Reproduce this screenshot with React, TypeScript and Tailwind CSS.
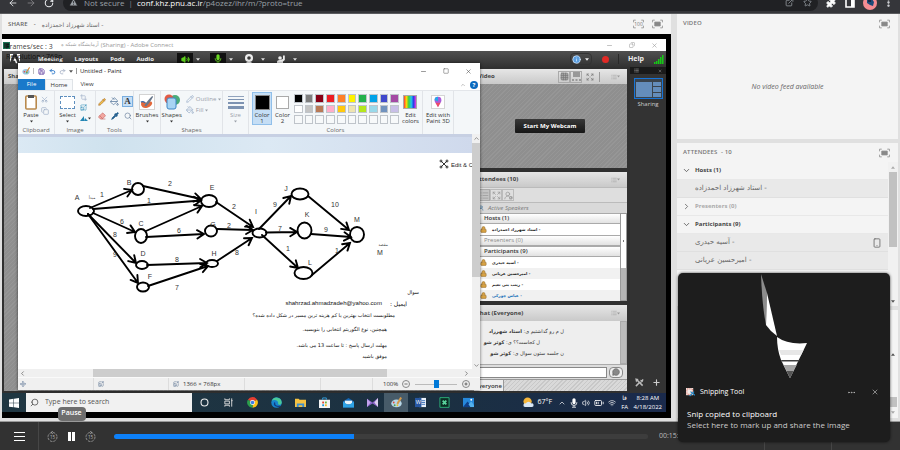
import type { ReactNode } from "react";
import {
  ArrowLeft, ArrowRight, RotateCw, TriangleAlert, ExternalLink, Star, Puzzle, MoreVertical,
  Minus, Square, X, Copy, Volume2, UserRound, Save, Undo2, Redo2, Scissors, Crop,
  Pencil, PaintBucket, Eraser, Pipette, Search, ChevronDown, ChevronRight, ChevronUp,
  ChevronLeft, Plus, Lock, MessageCircle, Wifi, Smartphone, Ellipsis,
  Info, Grid3x3, Expand, List, UserRoundCog, Move,
  ImageUpscale, BatteryMedium,
} from "lucide-react";

const ui = "font-['Open_Sans','Noto_Sans','DejaVu_Sans',sans-serif]";
const fa = "font-['DejaVu_Sans',sans-serif]";

function Caret({ className = "" }: { className?: string }) {
  return (
    <svg viewBox="0 0 6 4" className={`h-[3px] w-1 shrink-0 ${className}`}>
      <path d="M0 0h6L3 4z" fill="currentColor" />
    </svg>
  );
}

function CaretUp({ className = "" }: { className?: string }) {
  return (
    <svg viewBox="0 0 6 4" className={`h-[3px] w-1 shrink-0 ${className}`}>
      <path d="M0 4h6L3 0z" fill="currentColor" />
    </svg>
  );
}

function MicGlyph({ className = "" }: { className?: string }) {
  return (
    <svg viewBox="0 0 10 12" className={`h-2.5 w-2 ${className}`}>
      <rect x="3" y="0" width="4" height="7.500" rx="2" fill="currentColor" />
      <path d="M1.500 5v1a3.500 3 0 0 0 7 0V5M5 9v2M2.500 11.300h5" fill="none" stroke="currentColor" />
    </svg>
  );
}

/* ---------- browser ---------- */

function BrowserBar() {
  return (
    <header className="flex h-[14px] shrink-0 items-end overflow-hidden border-b border-[#5a5b5e] bg-[#35363a] text-[#e8eaed]">
      <div className="flex h-[21px] w-full shrink-0 items-center">
        <nav className="flex w-[63px] items-center gap-2 pl-2">
          <button aria-label="Back"><ArrowLeft size={10} /></button>
          <button aria-label="Forward" className="text-[#85868a]"><ArrowRight size={10} /></button>
          <button aria-label="Reload"><RotateCw size={10} strokeWidth={2.5} /></button>
        </nav>
        <div className="flex h-4 flex-1 items-center rounded-full bg-[#202124] px-1.5 text-[8px] leading-[10px] text-[#9aa0a6]">
          <TriangleAlert size={9} fill="#9aa0a6" stroke="#202124" />
          <span className="ml-1.5 whitespace-nowrap">Not secure</span>
          <span className="mx-1 text-[#80868b]">|</span>
          <a href="#page" className="whitespace-nowrap"><span className="text-white">conf.khz.pnu.ac.ir</span>/p4ozez/ihr/m/?proto=true</a>
          <div className="ml-auto flex gap-[9px]">
            <button aria-label="Share"><ExternalLink size={9} /></button>
            <button aria-label="Bookmark"><Star size={9} /></button>
          </div>
        </div>
        <div className="flex w-[82px] items-center pl-2">
          <button aria-label="Extensions"><Puzzle size={10} fill="white" /></button>
          <button aria-label="Side panel" className="ml-[9px]">
            <svg viewBox="0 0 10 10" className="size-2.5"><path d="M1 1h8v8H1z" fill="none" stroke="#fff" strokeWidth="1.6" /><path d="M6 1h3v8H6z" fill="#fff" /></svg>
          </button>
          <button aria-label="Profile" className="ml-2">
            <svg viewBox="0 0 14 14" className="size-3.5"><circle cx="7" cy="7" r="7" fill="#f58c92" /><path d="M4 4l5-1 2 3-1 4-3-1-3-2z" fill="#1d4a78" /><path d="M5 3h3v3H5z" fill="#1b2640" /></svg>
          </button>
          <button aria-label="Menu" className="ml-1.5"><MoreVertical size={11} strokeWidth={3} /></button>
        </div>
      </div>
    </header>
  );
}

function FullScreenGlyph({ label }: { label?: string }) {
  return (
    <svg viewBox="0 0 20 16" className="h-2.5 w-[11px]" fill="none" stroke="#888" strokeWidth="1.4">
      <path d="M5 1H1v4M15 1h4v4M5 15H1v-4M15 15h4v-4" />
      {label ? <text x="10" y="11.5" fontSize="9" textAnchor="middle" fill="#777" stroke="none">{label}</text> : <path d="M5 4.500h10v7H5z" fill="#888" />}
    </svg>
  );
}

/* ---------- paint window ---------- */

const palette = [
  "#000000", "#7f7f7f", "#880015", "#ed1c24", "#ff7f27", "#fff200", "#22b14c", "#00a2e8", "#3f48cc", "#a349a4",
  "#ffffff", "#c3c3c3", "#b97a57", "#ffaec9", "#ffc90e", "#efe4b0", "#b5e61d", "#99d9ea", "#7092be", "#c8bfe7",
  "#f7f9fa", "#f7f9fa", "#f7f9fa", "#f7f9fa", "#f7f9fa", "#f7f9fa", "#f7f9fa", "#f7f9fa", "#f7f9fa", "#f7f9fa",
];

function Group({ label, className, children }: { label: string; className: string; children: ReactNode }) {
  return (
    <section className={`flex shrink-0 flex-col border-r border-[#e1e4e8] ${className}`}>
      <div className="flex h-[34px] justify-center pt-px">{children}</div>
      <div className="h-2 text-center text-[6px] leading-[10px] text-[#666]">{label}</div>
    </section>
  );
}

function BigTool({ label, children, caret = true, className = "" }: { label: string; children: ReactNode; caret?: boolean; className?: string }) {
  return (
    <button className={`flex h-[33px] shrink-0 flex-col items-center justify-start text-[6px] leading-[6px] ${className}`}>
      <span className="flex h-5 shrink-0 items-center">{children}</span>
      <span className="whitespace-pre-line">{label}</span>
      {caret && <Caret className="mt-0.5 h-0.5 w-[3px]" />}
    </button>
  );
}

function Ribbon() {
  return (
    <div className="flex h-11 shrink-0 border-t border-[#e3e6ea] bg-[#f4f7f9] text-[#333]">
      <Group label="Clipboard" className="w-[37px]">
        <BigTool label="Paste">
          <svg viewBox="0 0 12 16" className="h-4 w-3"><rect x=".8" y="2" width="10.400" height="13" rx="1" fill="#fff" stroke="#b98a4e" strokeWidth="1.6" /><path d="M3 1h6v3H3z" fill="#555" /></svg>
        </BigTool>
        <div className="ml-0.5 flex flex-col gap-1 pt-1 text-[#9aabc4]">
          <button aria-label="Cut"><Scissors size={7} className="-rotate-90" /></button>
          <button aria-label="Copy"><Copy size={8} /></button>
        </div>
      </Group>
      <Group label="Image" className="w-[41px]">
        <BigTool label="Select"><span className="h-[13px] w-[15px] border border-dashed border-[#5e8fbe] bg-white" /></BigTool>
        <div className="ml-1 flex flex-col gap-[3px] pt-0.5 text-[#2386b4]">
          <button aria-label="Crop" className="text-[#9aabc4]"><Crop size={7} /></button>
          <button aria-label="Resize"><ImageUpscale size={7} /></button>
          <button aria-label="Rotate" className="flex items-center"><svg viewBox="0 0 8 8" className="size-2"><path d="M0 7l4-5v5zM4 7h4L5 4z" fill="currentColor" /></svg><Caret className="h-0.5 w-[3px] text-[#333]" /></button>
        </div>
      </Group>
      <Group label="Tools" className="w-[38px]">
        <div className="grid h-[30px] grid-cols-3 place-items-center gap-x-0.5 pt-0.5">
          <button aria-label="Pencil"><Pencil size={8} stroke="#a86b2d" fill="#f3c34b" /></button>
          <button aria-label="Fill with color"><PaintBucket size={9} stroke="#58789c" /></button>
          <button className="flex h-[11px] w-[11px] items-center justify-center border border-[#79aee0] bg-[#c5def5] font-['Liberation_Serif',serif] text-[9px] leading-none font-bold">A</button>
          <button aria-label="Eraser"><Eraser size={8} stroke="#c86a66" fill="#f2a7a0" /></button>
          <button aria-label="Color picker"><Pipette size={8} stroke="#26618f" fill="#26618f" /></button>
          <button aria-label="Magnifier"><Search size={8} stroke="#687f9b" /></button>
        </div>
      </Group>
      <Group label="" className="w-[27px]">
        <BigTool label="Brushes">
          <svg viewBox="0 0 16 16" className="size-4 border border-[#d3d3d3] bg-white"><path d="M1 8c4-3 5 2 8 1 3-2 4-2 5 0-1 5-8 7-11 5-3-3-1-4-2-6" fill="#e2683b" /><path d="M5 12c2-4 6-8 9-11l1 1c-2 4-5 8-8 11z" fill="#68788c" /><path d="M1 8c2-1 3-1 5 1" fill="none" stroke="#2b70ba" strokeWidth="1.5" /></svg>
        </BigTool>
      </Group>
      <Group label="Shapes" className="w-[62px]">
        <BigTool label="Shapes">
          <svg viewBox="0 0 16 16" className="size-4"><circle cx="11" cy="6" r="5" fill="#4aab7a" /><circle cx="5" cy="5" r="4.500" fill="#e15b46" /><rect x="3" y="4" width="9" height="11" rx="2" fill="#a8d4f3" stroke="#3f86c6" /></svg>
        </BigTool>
        <div className="ml-1 flex flex-col gap-[3px] pt-[3px] text-[6px] leading-[8px] text-[#9ba1aa]">
          <button className="flex items-center gap-0.5"><Pencil size={8} stroke="#91a7c4" />Outline<Caret className="h-0.5 w-[3px]" /></button>
          <button className="flex items-center gap-0.5"><PaintBucket size={8} stroke="#91a7c4" />Fill<Caret className="h-0.5 w-[3px]" /></button>
        </div>
      </Group>
      <Group label="" className="w-[26px]">
        <BigTool label="Size" className="text-[#9ba1aa]">
          <span className="flex w-4 flex-col gap-0.5"><i className="h-px bg-[#91a3bd]" /><i className="h-px bg-[#7d93b2]" /><i className="h-0.5 bg-[#7d93b2]" /><i className="h-[3px] bg-[#7d93b2]" /></span>
        </BigTool>
      </Group>
      <Group label="Colors" className="w-[174px]">
        <BigTool caret={false} label={"Color\n1"} className="w-5 bg-[#c5def5] outline-1 -outline-offset-1 outline-[#90bfea]"><span className="size-[15px] border border-[#888] bg-black" /></BigTool>
        <BigTool caret={false} label={"Color\n2"} className="w-[21px]"><span className="size-[13px] border border-[#aaa] bg-white" /></BigTool>
        <div className="mt-px grid h-8 w-[107px] grid-cols-10">
          {palette.map((c, i) => (
            <button key={i} aria-label={`Color ${c}`} className="m-px border border-[#bfc4ca]" style={{ backgroundColor: c }} />
          ))}
        </div>
        <BigTool caret={false} label={"Edit\ncolors"} className="ml-0.5"><span className="size-3.5 border border-[#aaa] bg-[linear-gradient(to_right,#ff3a3a,#ffd900,#35d048,#25c9e8,#2b3be8,#f03ce0)]" /></BigTool>
      </Group>
      <Group label="" className="w-[31px]">
        <BigTool caret={false} label={"Edit with\nPaint 3D"}>
          <svg viewBox="0 0 14 14" className="size-3.5 border border-[#d5d5d5] bg-white"><path d="M7 1a4 4 0 0 1 4 4c0 3-3 4-4 8-1-4-4-5-4-8a4 4 0 0 1 4-4" fill="#a85bd8" /><path d="M3 5a4 4 0 0 1 4-4v5z" fill="#28a7e8" /><path d="M4 8l6 0-3 5z" fill="#ec4b6a" /></svg>
        </BigTool>
      </Group>
    </div>
  );
}

const nodes: [number, number, number, number][] = [
  [86, 211, 8, 5], [138, 189, 6, 6], [141, 236, 6, 7], [142, 265, 6, 4], [143, 287, 6, 4.5],
  [209, 201, 8, 6], [211, 231, 6, 5.5], [212, 263.5, 6, 3.5], [259.5, 233, 7, 4.5],
  [300, 194, 8.5, 5.5], [304.5, 230.5, 7, 8], [303.5, 273, 9, 6], [357, 234.5, 7, 7.5],
];

const edges: [number, number, number, number][] = [
  [90, 208, 132, 190], [143, 186, 201, 199], [93, 209, 201, 200.5], [93, 213, 135, 232], [146, 231, 202, 206],
  [146, 237, 204, 234], [88, 214, 136, 263], [88, 214, 138, 283], [147, 265, 207, 263], [148, 286, 208, 266],
  [216, 202, 253, 227], [217, 229, 253, 230], [217, 261, 252, 238], [259, 229, 291, 196], [266, 232.5, 297, 232],
  [262, 235, 298, 268], [308, 196, 349, 230], [311, 234, 351, 237], [312, 275, 350, 243],
];

const marks: [string, number, number][] = [
  ["A", 77, 197], ["B", 129, 182], ["1", 102, 194], ["2", 170, 183], ["E", 212, 187], ["1", 149, 200], ["6", 122, 221],
  ["C", 141, 223], ["8", 115, 234], ["9", 115, 254], ["D", 143, 253], ["F", 150, 276], ["6", 179, 230], ["G", 213, 224],
  ["8", 177, 259], ["7", 177, 287], ["H", 214, 253], ["2", 234, 206], ["I", 256, 211], ["2", 229, 225], ["8", 237, 252],
  ["J", 286, 188], ["9", 275, 204], ["K", 307, 214], ["7", 280, 228], ["10", 335, 204], ["9", 326, 229], ["1", 288, 248],
  ["1", 337, 250], ["L", 310, 262], ["M", 357, 219], ["M", 380, 252],
];

function arrow([x1, y1, x2, y2]: [number, number, number, number]) {
  const a = Math.atan2(y2 - y1, x2 - x1);
  const wing = (s: number) => `${x2 - 8 * Math.cos(a + s)} ${y2 - 8 * Math.sin(a + s)}`;
  return `M${x1} ${y1}L${x2} ${y2}M${wing(0.55)}L${x2} ${y2}L${wing(-0.55)}`;
}

function Network() {
  return (
    <svg viewBox="18 153 453 134" className="block h-[134px] w-[453px] shrink-0 overflow-visible font-['Liberation_Sans',sans-serif]">
      <g fill="none" stroke="#000" strokeWidth="1.900" strokeLinecap="round">
        {edges.map((e, i) => <path key={i} d={arrow(e)} />)}
        {nodes.map(([cx, cy, rx, ry], i) => <ellipse key={i} cx={cx} cy={cy} rx={rx} ry={ry} />)}
      </g>
      <g fontSize="7" textAnchor="middle" fill="#333">
        {marks.map(([t, x, y], i) => <text key={i} x={x} y={y + 2.5}>{t}</text>)}
      </g>
      <g fontSize="4" textAnchor="middle" fill="#444" fontFamily="DejaVu Sans">
        <text x="92" y="199">مبدأ</text>
        <text x="383" y="246">مقصد</text>
      </g>
      <g stroke="#333" strokeWidth="1" fill="none">
        <path d="M441 161l6 6M447 161l-6 6" /><circle cx="441" cy="161" r="1" /><circle cx="447" cy="161" r="1" /><circle cx="441" cy="167" r="1" /><circle cx="447" cy="167" r="1" />
      </g>
      <text x="451" y="167" fontSize="6" fill="#222">Edit &amp; C</text>
    </svg>
  );
}

function PaintWindow() {
  return (
    <article className={`absolute top-6 left-4 flex h-[327px] w-[462px] flex-col overflow-hidden bg-white shadow-[0_0_3px_rgba(0,0,0,.6)] ${ui}`}>
      <div className="flex h-4 shrink-0 items-center pl-1 text-[#555]">
        <svg viewBox="0 0 10 10" className="size-2"><ellipse cx="5" cy="6" rx="4.500" ry="3.500" fill="#9bc5df" /><circle cx="3" cy="6" r="1" fill="#e44" /><circle cx="6" cy="7" r="1" fill="#4a4" /><path d="M5 6l4-6 1 1-4 6z" fill="#d78b34" /></svg>
        <span className="mx-[3px] h-1.5 w-px bg-[#bbb]" />
        <button aria-label="Save" className="ml-px"><Save size={7} stroke="#7153a8" strokeWidth={3} /></button>
        <button aria-label="Undo" className="ml-1"><Undo2 size={7} stroke="#2673c7" strokeWidth={3} /></button>
        <button aria-label="Redo" className="ml-[3px]"><Redo2 size={7} stroke="#aab5c8" strokeWidth={3} /></button>
        <Caret className="ml-[3px]" />
        <span className="mx-[3px] h-1.5 w-px bg-[#999]" />
        <h2 className="text-[6px] text-[#222]">Untitled - Paint</h2>
        <div className="mr-2 ml-auto flex gap-4">
          <button aria-label="Minimize"><Minus size={7} /></button>
          <button aria-label="Maximize"><Square size={6} /></button>
          <button aria-label="Close"><X size={7} /></button>
        </div>
      </div>
      <div className="flex h-[11px] shrink-0 items-stretch text-[6px] text-[#333]">
        <button className="w-[27px] bg-[#1979ca] text-white">File</button>
        <button className="w-7 border-x border-t border-[#dfe3e7] bg-[#f7f9fb]">Home</button>
        <button className="w-7">View</button>
        <div className="mr-0.5 ml-auto flex items-center gap-1 text-[#888]">
          <ChevronUp size={6} />
          <button className="flex size-2 items-center justify-center rounded-full bg-[#0a69be] text-[6px] leading-none font-bold text-white">?</button>
        </div>
      </div>
      <Ribbon />
      <div className="flex min-h-0 flex-1">
        <div className="flex min-w-0 flex-1 flex-col">
          <div className="h-[3px] shrink-0 bg-[#c7d0e3]" />
          <div className="h-4 shrink-0 bg-[linear-gradient(to_right,#dbe9f4,#cfe2ee_20%,#dce9f4_55%,#cfd9ec)]" />
          <Network />
          <div dir="rtl" className={`flex flex-col items-start text-[5px] text-[#111] ${fa}`}>
            <p className="mr-[53px] h-[11px] leading-[11px]">سوال</p>
            <p className="mr-[65px] flex h-[11px] gap-2 text-[6px] leading-[11px]"><span>ایمیل :</span><a href="mailto:shahrzad.ahmadzadeh@yahoo.com" className="font-['Liberation_Sans',sans-serif]">shahrzad.ahmadzadeh@yahoo.com</a></p>
            <p className="mr-[77px] h-[13px] leading-[12px]">مطلوبست انتخاب بهترین یا کم هزینه ترین مسیر در شکل داده شده؟</p>
            <p className="mr-[85px] h-[15px] leading-[15px]">همچنین، نوع الگوریتم انتخابی را بنویسید.</p>
            <p className="mr-[85px] h-[13px] leading-[16px]">مهلت ارسال پاسخ : تا ساعت 13 می باشد.</p>
            <p className="mr-[85px] h-[11px] leading-[12px]">موفق باشید</p>
          </div>
        </div>
        <div className="flex w-2 shrink-0 flex-col items-center bg-[#f0f0f0] text-[#555]">
          <ChevronUp size={7} className="my-px" />
          <div className="h-[134px] w-full bg-[#cdcdcd]" />
          <ChevronDown size={7} className="mt-auto" />
        </div>
      </div>
      <div className="flex h-2 shrink-0 items-center bg-[#f0f0f0] text-[#444]">
        <ChevronLeft size={7} className="mr-[67px] ml-px" />
        <div className="h-full w-[294px] bg-[#cdcdcd]" />
        <ChevronRight size={7} className="mr-2.5 ml-auto" />
      </div>
      <footer className="flex h-[13px] shrink-0 items-stretch border-t border-[#fafafa] bg-[#f0f0f0] text-[6px] leading-[11px] text-[#333]">
        <div className="flex w-[76px] items-center border-r border-[#ddd] pl-0.5"><Move size={6} stroke="#4b6788" /></div>
        <div className="flex w-[75px] items-center border-r border-[#ddd] pl-1"><ImageUpscale size={6} stroke="#5b7391" /></div>
        <div className="flex w-[76px] items-center gap-1 border-r border-[#ddd] pl-1"><ImageUpscale size={6} stroke="#5b7391" />1366 × 768px</div>
        <div className="w-[76px] border-r border-[#ddd]" />
        <div className="w-[52px] border-r border-[#ddd]" />
        <div className="flex flex-1 items-center gap-1 pl-2.5">
          <span>100%</span>
          <button aria-label="Zoom out" className="flex size-2 shrink-0 items-center justify-center rounded-full border border-[#888]"><Minus size={4} strokeWidth={4} /></button>
          <input type="range" aria-label="Zoom" defaultValue={50} className="mx-px h-px w-[42px] appearance-none bg-[#bbb] [&::-webkit-slider-thumb]:h-2 [&::-webkit-slider-thumb]:w-[5px] [&::-webkit-slider-thumb]:appearance-none [&::-webkit-slider-thumb]:bg-[#0078d7]" />
          <button aria-label="Zoom in" className="flex size-2 shrink-0 items-center justify-center rounded-full border border-[#888]"><Plus size={4} strokeWidth={4} /></button>
        </div>
      </footer>
    </article>
  );
}

/* ---------- shared Adobe Connect screen ---------- */

function ConnectToolbar() {
  return (
    <div className="flex h-4 shrink-0 items-center bg-linear-to-b from-[#505050] to-[#323232] pl-2 text-[6px] font-bold text-[#eee]">
      <svg viewBox="0 0 12 12" className="size-2.5"><path d="M0 0h12v12H0z" fill="#333" /><path d="M0 0h4L0 10zM12 0H8l4 10zM6 4l3 7H7L6 8H4z" fill="#fff" /></svg>
      <nav className="ml-[18px] flex w-[139px] gap-3">
        <button>Meeting</button><button>Layouts</button><button>Pods</button><button>Audio</button>
      </nav>
      <div className="flex items-center text-[#ddd]">
        <button aria-label="Speaker" className="flex h-[13px] w-4 items-center justify-center bg-[#111]"><Volume2 size={9} stroke="#5fd21d" fill="#5fd21d" /></button><Caret className="ml-[3px]" />
        <button aria-label="Microphone" className="ml-2.5 flex h-[13px] w-4 items-center justify-center bg-[#111] text-[#6ad823]"><MicGlyph /></button><Caret className="ml-[3px]" />
        <button aria-label="Webcam" className="ml-2 flex w-4 justify-center">
          <svg viewBox="0 0 10 10" className="size-2.5"><circle cx="5" cy="4" r="4" fill="#eee" /><circle cx="5" cy="4" r="1.800" fill="#3a3a3a" /><path d="M1 10l2-2h4l2 2z" fill="#eee" /></svg>
        </button>
        <Caret className="ml-1" />
        <button aria-label="Raise hand" className="ml-2 flex w-4 justify-center">
          <svg viewBox="0 0 10 10" className="size-2.5"><circle cx="4" cy="4" r="1.800" fill="#eee" /><path d="M1 10V8q0-2 3-2l3-1V1.500h1.800V6L7 7.500V10z" fill="#eee" /></svg>
        </button>
        <Caret className="ml-1" />
      </div>
      <div className="mr-0.5 ml-auto flex items-center">
        <button aria-label="Status" className="flex h-3 w-[22px] items-center justify-center gap-1 rounded-sm border border-[#333]"><Info size={9} stroke="#dcecff" fill="#5c9fe0" /><Caret /></button>
        <span className="ml-2.5 size-[7px] rounded-full bg-[#e12a26]" />
        <span className="mx-[9px] h-2.5 w-px bg-[#292929]" />
        <button className="text-[7px]">Help</button>
        <svg viewBox="0 0 10 9" className="ml-2.5 h-[9px] w-2.5"><path d="M0 7h1.500v2H0zM2 6h1.500v3H2zM4 4h1.500v5H4zM6 2h1.500v7H6zM8 0h1.500v9H8z" fill="#16c916" /></svg>
      </div>
    </div>
  );
}

const podHead = "flex shrink-0 items-center bg-linear-to-b from-[#e6e6e6] to-[#c9c9c9] text-[6px] font-bold text-[#444]";
const hatch = "bg-[repeating-linear-gradient(135deg,#8f8f8f_0px,#8f8f8f_2px,#969696_2px,#969696_3px)]";

function PodMenu() {
  return <button aria-label="Pod options" className="mr-[7px] ml-auto flex items-center text-[#999]"><List size={6} /><Caret className="h-0.5 w-[3px]" /></button>;
}

function PersonRow({ name, blue, shade }: { name: string; blue?: boolean; shade?: boolean }) {
  return (
    <li className={`flex h-[11px] items-center gap-[5px] pl-1.5 text-[4px] ${fa} ${shade ? "bg-[#f1f1f1]" : "bg-white"} ${blue ? "text-[#1670b8]" : "text-[#222]"}`}>
      <Lock size={7} stroke="#997235" fill="#d9a343" />
      <span dir="rtl" className="font-bold">{name}</span>
    </li>
  );
}

function ConnectRight() {
  const section = "h-[11px] border-y border-[#aaa] bg-linear-to-b from-white to-[#e2e2e2] pl-2.5 text-[6px] leading-[9px]";
  return (
    <div className={`flex w-[153px] shrink-0 flex-col gap-1 ${ui}`}>
      <section className="flex h-[99px] flex-col">
        <h3 className={`${podHead} h-[15px] pl-1`}>
          <span>Video</span>
          <div className="ml-auto flex items-center text-[#777]">
            <button aria-label="Grid" className="flex h-3 w-3 items-center justify-center border border-[#aaa]"><Grid3x3 size={9} fill="#aaa" /></button>
            <button aria-label="Filmstrip" className="flex h-3 w-3 items-center justify-center border border-[#aaa]"><svg viewBox="0 0 9 9" className="size-[9px]"><path d="M1 0h7v5H1zM0 7h2v2H0zM3.500 7h2v2h-2zM7 7h2v2H7z" fill="#999" /></svg></button>
            <button aria-label="Expand" className="ml-1"><Expand size={8} /></button>
            <span className="mr-[3px] ml-[5px] h-2.5 w-px bg-[#999]" />
          </div>
          <span className="ml-2"><PodMenu /></span>
        </h3>
        <div className={`flex flex-1 items-center pl-[41px] ${hatch}`}>
          <button className="h-3.5 w-[70px] rounded-[1px] bg-linear-to-b from-[#383838] to-[#171717] text-[6px] font-bold whitespace-nowrap text-white">Start My Webcam</button>
        </div>
      </section>
      <section className="flex h-[129px] flex-col bg-[#d9d9d9]">
        <h3 className={`${podHead} h-[15px] pl-px`}>Attendees&nbsp; <span>(10)</span><PodMenu /></h3>
        <div className="flex h-4 shrink-0 items-center border-y border-[#bbb] bg-[#dedede] pl-1 text-[#999]">
          <button aria-label="List view" className="flex h-3 w-3 items-center justify-center border border-[#aaa] bg-[#c4c4c4]"><List size={9} /></button>
          <button aria-label="Breakouts" className="flex h-3 w-3 items-center justify-center border border-[#bbb]"><Expand size={9} /></button>
          <button aria-label="Status view" className="flex h-3 w-3 items-center justify-center border border-[#bbb]"><UserRoundCog size={9} /></button>
        </div>
        <p className="flex h-2.5 shrink-0 items-center gap-1 pl-1 text-[6px] leading-[9px] text-[#777] italic"><UserRound size={6} stroke="#36709c" />Active Speakers</p>
        <div className="flex min-h-0 flex-1">
          <div className="min-w-0 flex-1 overflow-hidden bg-white">
            <h4 className={`${section} font-semibold text-[#333]`}>Hosts (1)</h4>
            <ul><PersonRow name="- استاد شهرزاد احمدزاده" /></ul>
            <h4 className={`${section} text-[#888]`}>Presenters (0)</h4>
            <h4 className={`${section} font-semibold text-[#333]`}>Participants (9)</h4>
            <ul>
              <PersonRow name="- آسیه حیدری" />
              <PersonRow name="- امیرحسین عریانی" shade />
              <PersonRow name="- زینب بنی نعیم" />
              <PersonRow name="- عباس چورکی" blue shade />
            </ul>
          </div>
          <div className="w-[7px] shrink-0 border border-[#999] bg-[#b5b5b5]"><div className="flex h-[54px] items-center justify-center bg-white"><span className="h-0.5 w-px bg-[#777]" /></div></div>
        </div>
      </section>
      <section className="flex flex-1 flex-col bg-[#eee]">
        <h3 className={`${podHead} h-4 pl-0.5`}>Chat&nbsp; <span>(Everyone)</span><PodMenu /></h3>
        <div className="flex min-h-0 flex-1">
          <div dir="rtl" className={`flex flex-1 flex-col items-start justify-center overflow-hidden pr-14 text-[5px] leading-[11px] whitespace-nowrap text-[#333] ${fa}`}>
            <p>ل م رو گذاشتیم ی: <b>استاد شهرزاد</b></p>
            <p className="mr-6">ل کجاست؟؟ ی: <b>کوثر شو</b></p>
            <p>ن جلسه ستون سوال ی: <b>کوثر شو</b></p>
          </div>
          <div className="w-[7px] border border-[#aaa] bg-[#bbb]" />
        </div>
        <form className="flex h-[15px] shrink-0 items-center gap-0.5 border-t border-[#aaa] bg-[#ddd] px-1">
          <input aria-label="Chat message" className="h-[11px] min-w-0 flex-1 border border-[#888] bg-white" />
          <button type="button" aria-label="Send" className="flex h-[11px] w-3.5 items-center justify-center rounded-sm border border-[#888] bg-[#eee]"><MessageCircle size={8} fill="#888" stroke="#666" /></button>
        </form>
        <div className="flex h-3 shrink-0 border-t border-[#999] bg-[repeating-linear-gradient(135deg,#d9d9d9_0px,#d9d9d9_2px,#c8c8c8_2px,#c8c8c8_3px)]">
          <button className="w-[30px] border-r border-[#999] bg-[#eee] text-[6px] leading-[10px] font-semibold text-[#333]">Everyone</button>
        </div>
      </section>
    </div>
  );
}

function Layouts() {
  return (
    <aside className={`flex w-9 shrink-0 flex-col items-center bg-[#333] text-[6px] text-[#ccc] ${ui}`}>
      <div className="flex h-[7px] w-full items-center justify-between bg-[#1a1a1a] px-1"><List size={5} /><X size={4} /></div>
      <button className="mt-1 flex flex-col items-center gap-px">
        <span className="grid h-[21px] w-[29px] grid-cols-[2fr_1fr] gap-px border border-[#1674d8] bg-[#3a434c] p-px pt-[3px]">
          <i className="row-span-3 bg-[#648dbb]" /><i className="bg-[#648dbb]" /><i className="bg-[#648dbb]" /><i className="bg-[#648dbb]" />
        </span>
        Sharing
      </button>
      <div className="mt-auto mb-1.5 flex gap-2">
        <button aria-label="Manage layouts">
          <svg viewBox="0 0 10 10" className="size-[9px]" fill="none" stroke="#bbb" strokeWidth="1.700"><path d="M2 2l6.500 6.500M1 9l4-4" /><path d="M9 1.500L7.500 3 6 2.500M9 1.500L8 4 5.500 5M1 1l2 .5-1.500 2z" strokeWidth="1.200" /></svg>
        </button>
        <button aria-label="Add layout"><Plus size={9} strokeWidth={3} /></button>
      </div>
    </aside>
  );
}

/* ---------- Windows taskbar ---------- */

function AppIcon({ label, active, children }: { label: string; active?: boolean; children: ReactNode }) {
  return <button aria-label={label} className={`flex h-full w-6 shrink-0 items-center justify-center ${active ? "bg-[#475b69]" : ""}`}><svg viewBox="0 0 12 12" className="size-[11px]">{children}</svg></button>;
}

function Taskbar() {
  return (
    <div className={`flex h-[19px] shrink-0 items-center bg-[linear-gradient(to_right,#203742,#1b3041_65%,#1a2a4c)] text-[6px] text-white ${ui}`}>
      <button aria-label="Start" className="flex w-6 justify-center"><svg viewBox="0 0 10 10" className="size-2.5"><path d="M0 1.500l4.500-.7v4H0zM5 .7L10 0v4.800H5zM0 5.300h4.500v4L0 8.700zM5 5.300h5V10l-5-.7z" fill="#fff" /></svg></button>
      <label className="flex h-full w-[166px] items-center gap-1.5 bg-[#f1f1f1] pl-1 text-[#444]">
        <Search size={9} className="-scale-x-100" />
        <input aria-label="Search" placeholder="Type here to search" className="w-32 text-[7px] placeholder:text-[#555]" />
      </label>
      <AppIcon label="Cortana"><circle cx="6" cy="6" r="3.800" fill="none" stroke="#eee" strokeWidth="1.200" /></AppIcon>
      <AppIcon label="Task view"><path d="M2 1.500v1.500h5V1.500M2 10.500V9h5v1.500M2 4.500h5v3H2zM9.500 1.500v9M9 4h1.500" fill="none" stroke="#ddd" /></AppIcon>
      <AppIcon label="Chrome"><path d="M6 6L1 3a5.700 5.700 0 0 1 10 0z" fill="#e43e31" /><path d="M6 6l5-3a5.700 5.700 0 0 1-5 8.700z" fill="#fbc116" /><path d="M6 6v5.700A5.700 5.700 0 0 1 1 3z" fill="#2b9e4c" /><circle cx="6" cy="6" r="2.700" fill="#fff" /><circle cx="6" cy="6" r="2" fill="#3c7de6" /></AppIcon>
      <AppIcon label="Edge"><circle cx="6" cy="6" r="5.700" fill="#1784cf" /><path d="M1 4a5.600 5.600 0 0 1 10.700 2c0 3-4 3-4 1 1-3-4-5-6.700-3" fill="#49ca9a" /><path d="M4 6c-1 3 2 5 6 4" fill="none" stroke="#103c82" strokeWidth="1.500" /></AppIcon>
      <AppIcon label="Files"><path d="M0 2h4l1 1h7v8H0z" fill="#f5c242" /><path d="M2 7h8v4H8V9H4v2H2z" fill="#3d8fd0" /></AppIcon>
      <AppIcon label="Store"><path d="M0 3h12v9H0z" fill="#f4f4f4" /><path d="M4 3V1h4v2" fill="none" stroke="#36a2e0" /><path d="M3.500 5h2v2h-2z" fill="#e5452f" /><path d="M6.500 5h2v2h-2z" fill="#6cb33f" /><path d="M3.500 8h2v2h-2z" fill="#1b95d8" /><path d="M6.500 8h2v2h-2z" fill="#f5b820" /></AppIcon>
      <AppIcon label="Mail"><path d="M0 5l6-4 6 4v6.500H0z" fill="#1668b5" /><path d="M2 4h8v4H2z" fill="#e8f4fb" /><path d="M0 5l6 4 6-4v6.500H0z" fill="#2ea3e6" /></AppIcon>
      <AppIcon label="Visual Studio"><path d="M0 2l6 4 6-5v10L6 7l-6 4z" fill="#8661c5" /><path d="M0 2l4 4-4 5z" fill="#c3a2ed" /><path d="M12 1L8 6l4 5z" fill="#ddd1ef" /></AppIcon>
      <AppIcon label="Paint" active><ellipse cx="6" cy="7" rx="5.700" ry="4.300" fill="#b8d8e8" /><circle cx="3" cy="6" r="1" fill="#dd4c3b" /><circle cx="4" cy="9" r="1" fill="#4aa04c" /><circle cx="7" cy="9" r="1" fill="#f0bd22" /><path d="M6 7l4-7 2 1-4 7z" fill="#d59a4b" /></AppIcon>
      <AppIcon label="Word"><path d="M4 1h8v10H4z" fill="#e9f0fa" /><path d="M7 4h4M7 6h4M7 8h4" stroke="#3a70b7" /><path d="M0 1h7v10H0z" fill="#2757a1" /><text x="3.500" y="8" fontSize="6" fill="#fff" textAnchor="middle">W</text></AppIcon>
      <AppIcon label="Adobe Connect"><path d="M1 .7h10v10.600H1z" fill="#0b2d24" stroke="#2db47b" /><path d="M4 4l4 4M8 4L4 8" stroke="#5bd59e" strokeWidth="2" /></AppIcon>
      <AppIcon label="Photos"><path d="M0 1h12v10H0z" fill="#2688db" /><path d="M0 11l5-6 5 6z" fill="#103f87" /><path d="M6 8l3-3 3 4v2H8z" fill="#54b1ed" /><circle cx="9" cy="3" r="1" fill="#fff" /></AppIcon>
      <div className="ml-auto flex items-center pr-1">
        <svg viewBox="0 0 12 12" className="size-[11px]"><circle cx="5" cy="5" r="4.500" fill="#f6b73c" /><path d="M2 11a2 2 0 0 1 1-4 3.500 3.500 0 0 1 6 0 2 2 0 0 1 1 4z" fill="#d8e7f6" /></svg>
        <span className="ml-1 w-[18px] text-[7px]">67°F</span>
        <ChevronUp size={8} className="ml-0.5" />
        <MicGlyph className="ml-1" />
        <Volume2 size={8} className="ml-1" />
        <BatteryMedium size={10} className="ml-1" />
        <Wifi size={8} className="ml-1" />
        <span className="ml-1 w-2.5 text-center leading-[9px]">فا<br />FA</span>
        <time className="ml-1 text-center leading-[9px]">8:28 AM<br />4/18/2022</time>
      </div>
    </div>
  );
}

function SharedScreen() {
  return (
    <div className="flex min-h-0 flex-1 flex-col bg-black pt-[5px] pr-[5px] pb-[6px]">
      <div className={`relative flex min-h-0 flex-1 flex-col ${ui}`}>
        <div className="flex h-3 shrink-0 items-center bg-white text-[6px] text-[#999]">
          <span className="ml-px size-[7px] border border-[#1b7455] bg-[#12372c]" />
          <h2 className="ml-[51px] flex items-center gap-0.5"><span className={`text-[5px] ${fa}`} dir="rtl">آزمایشگاه شبکه ه</span> (Sharing) - Adobe Connect</h2>
          <div className="mr-2 ml-auto flex gap-4">
            <button aria-label="Minimize"><Minus size={7} /></button>
            <button aria-label="Restore"><Copy size={6} className="-scale-x-100" /></button>
            <button aria-label="Close"><X size={7} /></button>
          </div>
        </div>
        <ConnectToolbar />
        <div className="flex min-h-0 flex-1 gap-[3px] bg-[#303030]">
          <section className="mt-0.5 mb-0.5 ml-0.5 flex flex-1 flex-col">
            <h3 className={`${podHead} h-[15px] pl-1`}>Share</h3>
            <div className={`flex-1 ${hatch}`} />
          </section>
          <div className="-ml-[3px] flex py-0.5"><ConnectRight /></div>
          <Layouts />
        </div>
        <Taskbar />
        <PaintWindow />
        <p className="absolute top-[3px] left-1 text-[7px] leading-[10px] whitespace-nowrap text-black/80">Frames/sec : 3<br />Resolution : 768p</p>
      </div>
    </div>
  );
}

/* ---------- side pods ---------- */

function HostRow({ name, phone }: { name: string; phone?: boolean }) {
  return (
    <li className={`flex h-[18px] items-center border-b border-[#e0e0e0] bg-[#e9e9e9] pr-1.5 pl-[18px] text-[7px] text-[#666] ${fa}`}>
      <span dir="rtl">- {name}</span>
      {phone && <Smartphone size={10} className="ml-auto" />}
    </li>
  );
}

function SidePods() {
  const head = "flex h-[19px] items-center justify-between pr-2 pl-1.5 text-[6px] font-semibold tracking-wide text-[#777]";
  const row = "flex h-[18px] w-full items-center gap-1 border-b border-[#e8e8e8] pl-[5px] text-left text-[6px] font-bold";
  return (
    <div className="flex w-[221px] shrink-0 flex-col gap-1">
      <section className="flex h-[125px] flex-col bg-[#f4f4f4]">
        <div className={head}><h2>VIDEO</h2><button aria-label="Full screen video"><FullScreenGlyph /></button></div>
        <p className="pt-12 text-center text-[7px] leading-[12px] text-[#666] italic">No video feed available</p>
      </section>
      <section className="flex h-[163px] flex-col bg-[#f4f4f4]">
        <div className={head}><h2>ATTENDEES &nbsp;- 10</h2><button aria-label="Full screen attendees"><FullScreenGlyph /></button></div>
        <div className="flex flex-1">
          <div className="flex-1 text-[#444]">
            <button className={row}><ChevronDown size={9} />Hosts (1)</button>
            <ul><HostRow name="استاد شهرزاد احمدزاده" /></ul>
            <button className={`${row} text-[#aaa]`}><ChevronRight size={9} stroke="#555" />Presenters (0)</button>
            <button className={row}><ChevronDown size={9} />Participants (9)</button>
            <ul><HostRow name="آسیه حیدری" phone /><HostRow name="امیرحسین عریانی" /></ul>
          </div>
          <div className="flex w-2.5 flex-col items-center bg-[#f1f1f1] pt-1 pb-[3px] text-[#555]">
            <CaretUp className="text-[#aaa]" />
            <div className="mt-[3px] h-[75px] w-2 bg-[#c1c1c1]" />
            <Caret className="mt-auto" />
          </div>
        </div>
      </section>
      <section className="flex flex-1 justify-end bg-[#f4f4f4]">
        <div className="flex w-2.5 flex-col items-center pt-[43px] pb-1 text-[#555]">
          <CaretUp />
          <div className="mt-auto mb-1 h-2.5 w-2 bg-[#c1c1c1]" />
          <Caret className="text-[#aaa]" />
        </div>
      </section>
    </div>
  );
}

function Skip({ back }: { back?: boolean }) {
  return (
    <button aria-label={back ? "Back 15 seconds" : "Forward 15 seconds"}>
      <svg viewBox="0 0 22 22" className="size-[11px]" fill="none" stroke="#aaa" strokeWidth="1.500">
        <circle cx="11" cy="12" r="9" strokeDasharray="5 2" /><path d={back ? "M12 0L8 3l4 3" : "M10 0l4 3-4 3"} />
        <text x="11" y="15" fontSize="9" textAnchor="middle" fill="#bbb" stroke="none">15</text>
      </svg>
    </button>
  );
}

function Player() {
  return (
    <footer className="flex h-7 shrink-0 items-center bg-[#323232] text-[7px] text-[#bbb]">
      <button aria-label="Menu" className="flex h-full w-[39px] items-center justify-center border-r border-[#464646]">
        <span className="flex w-[11px] flex-col gap-[3px]"><i className="h-px bg-white" /><i className="h-px bg-white" /><i className="h-px bg-white" /></span>
      </button>
      <div className="flex w-[75px] items-center gap-2.5 pl-2">
        <Skip back />
        <div className="relative flex">
          <button aria-label="Pause" className="flex h-[9px] w-[7px] justify-between"><i className="w-[3px] bg-white" /><i className="w-[3px] bg-white" /></button>
          <span role="tooltip" className="absolute bottom-5 left-1/2 flex h-3.5 w-7 -translate-x-1/2 items-center justify-center rounded-sm bg-[#6e6e6e] font-semibold text-white">Pause</span>
        </div>
        <Skip />
      </div>
      <input type="range" aria-label="Playback position" defaultValue={45} className="h-[5px] min-w-0 flex-1 appearance-none rounded-full bg-[linear-gradient(to_right,#0d80f8_45%,#3d3d3d_45%)] [&::-webkit-slider-thumb]:size-0 [&::-webkit-slider-thumb]:appearance-none" />
      <time className="ml-[11px] w-[105px]">00:15:38</time>
      <div className="h-full w-[68px] border-x border-[#464646]" />
      <div className="w-[68px]" />
    </footer>
  );
}

function SnipToast() {
  return (
    <aside role="alert" className="absolute right-2.5 bottom-2 flex h-[169px] w-[212px] flex-col rounded-[5px] bg-[#1d1d1d] text-white shadow-[0_0_3px_rgba(0,0,0,.7)]">
      <svg viewBox="678 273 212 110" className="h-[110px] w-full">
        <path d="M761 274l6 19-1 32q-4-20-5-51" fill="#8c8c8c" />
        <path d="M767 293l10 43q-7-5-11-11z" fill="#fff" />
        <path d="M777 337q11 8 30 6l-17 35-9-18q-4-11-4-23" fill="#fff" />
        <path d="M779 350h24.500l-2.500 5h-20z" fill="#e7e7e7" />
        <path d="M781 360h19l-1 1.500h-17.300z" fill="#3e3e3e" />
        <path d="M783.500 365h13.200L790 378z" fill="#a5a5a5" />
        <path d="M786.500 371h7L790 378z" fill="#555" />
      </svg>
      <div className="flex h-[18px] items-center pr-[11px] pl-2 text-[7px]">
        <svg viewBox="0 0 10 10" className="size-[9px]"><path d="M0 0h8v8H0z" fill="#f2ece9" /><path d="M1 1h6v6H1z" fill="none" stroke="#d74a3b" strokeDasharray="1" /><path d="M5 4l5 4M4 9l5-5" stroke="#2389c9" strokeWidth="1.300" /></svg>
        <span className="ml-[5px]">Snipping Tool</span>
        <button aria-label="More" className="ml-auto text-[#bbb]"><Ellipsis size={9} /></button>
        <button aria-label="Dismiss" className="ml-[15px] text-[#bbb]"><X size={8} /></button>
      </div>
      <div className="pt-[7px] pl-[9px] text-[8px] leading-[11px] whitespace-nowrap">
        <h2>Snip copied to clipboard</h2>
        <p className="text-[#ccc]">Select here to mark up and share the image</p>
      </div>
    </aside>
  );
}

export default function App() {
  return (
    <div className={`relative flex h-screen min-h-[450px] w-full flex-col overflow-hidden bg-[#e0e0e0] ${ui}`}>
      <BrowserBar />
      <main className="flex min-h-0 flex-1 gap-1.5 border-b border-[#999] pr-0.5 pb-[3px] pl-0.5">
        <section className="flex min-w-0 flex-1 flex-col">
          <div className="flex h-5 shrink-0 items-center bg-[#f4f4f4] pr-2 pl-1.5 text-[6px] text-[#666]">
            <h1 className="flex items-center gap-1.5 font-semibold tracking-wide">SHARE<span>-</span><span dir="rtl" className={`font-normal tracking-normal ${fa}`}>- استاد شهرزاد احمدزاده</span></h1>
            <div className="ml-auto flex gap-2">
              <button aria-label="Actual size"><FullScreenGlyph label="100" /></button>
              <button aria-label="Full screen"><FullScreenGlyph /></button>
            </div>
          </div>
          <SharedScreen />
        </section>
        <SidePods />
      </main>
      <Player />
      <SnipToast />
    </div>
  );
}
